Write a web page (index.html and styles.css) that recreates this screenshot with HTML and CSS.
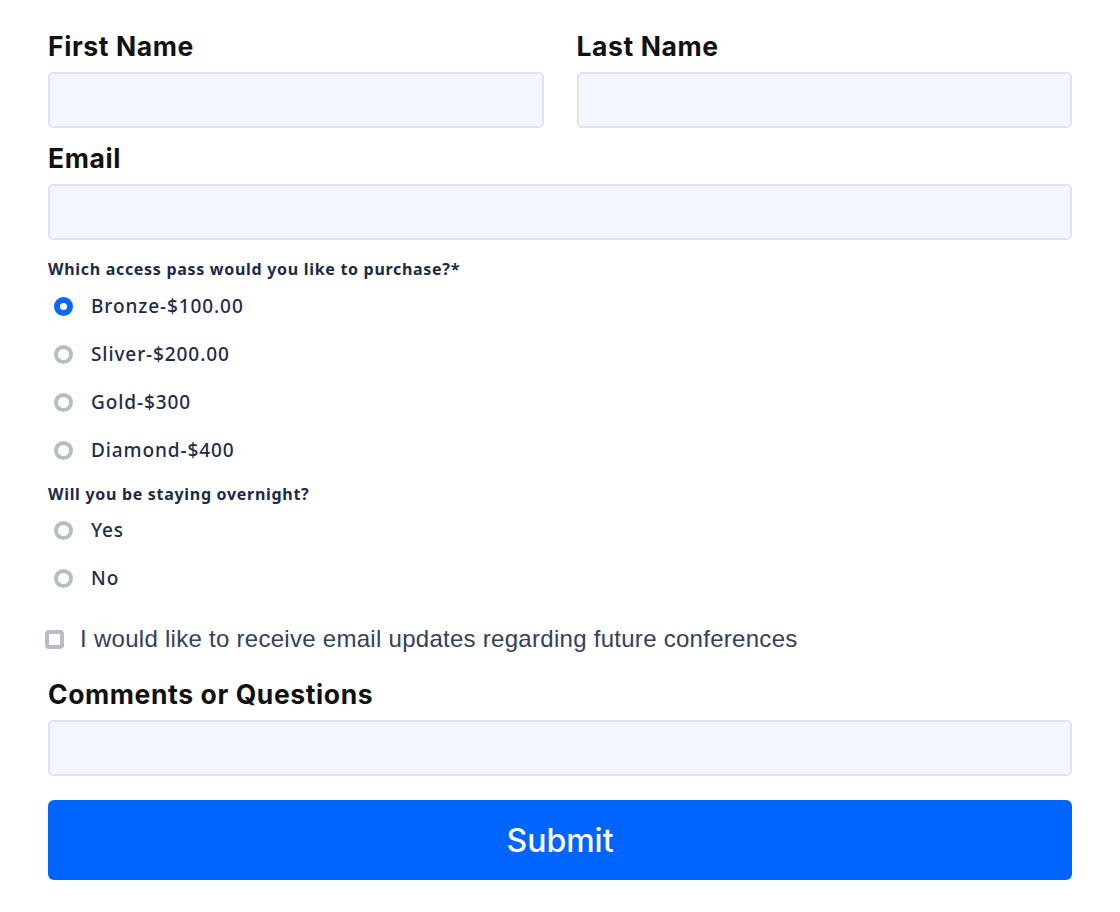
FILE: index.html
```html
<!DOCTYPE html>
<html lang="en">
<head>
<meta charset="utf-8">
<title>Registration Form</title>
<link rel="stylesheet" href="styles.css">
</head>
<body>
<form class="form">
  <div class="row-2">
    <div class="field">
      <label class="label">First Name</label>
      <div class="input"></div>
    </div>
    <div class="field">
      <label class="label">Last Name</label>
      <div class="input"></div>
    </div>
  </div>
  <div class="field email">
    <label class="label">Email</label>
    <div class="input"></div>
  </div>

  <div class="question q1">Which access pass would you like to purchase?*</div>
  <div class="options">
    <div class="option"><span class="radio checked"></span><span class="opt-text">Bronze-$100.00</span></div>
    <div class="option"><span class="radio"></span><span class="opt-text">Sliver-$200.00</span></div>
    <div class="option"><span class="radio"></span><span class="opt-text">Gold-$300</span></div>
    <div class="option"><span class="radio"></span><span class="opt-text">Diamond-$400</span></div>
  </div>

  <div class="question q2">Will you be staying overnight?</div>
  <div class="options">
    <div class="option"><span class="radio"></span><span class="opt-text">Yes</span></div>
    <div class="option"><span class="radio"></span><span class="opt-text">No</span></div>
  </div>

  <div class="check-row">
    <span class="checkbox"></span>
    <span class="check-text">I would like to receive email updates regarding future conferences</span>
  </div>

  <div class="field comments">
    <label class="label">Comments or Questions</label>
    <div class="input"></div>
  </div>

  <button type="button" class="submit">Submit</button>
</form>
</body>
</html>
```

FILE: styles.css
```css
* { box-sizing: border-box; }

body {
  margin: 0;
  background: #ffffff;
  font-family: Inter, "Liberation Sans", Arial, sans-serif;
}

.form {
  padding: 31px 48px 0 48px;
  display: flex;
  flex-direction: column;
}

.row-2 {
  display: grid;
  grid-template-columns: 1fr 1fr;
  column-gap: 33px;
}

.field {
  display: flex;
  flex-direction: column;
}

.label {
  font-family: Inter, "Liberation Sans", sans-serif;
  font-size: 26.5px;
  line-height: 30px;
  font-weight: 700;
  color: #111111;
  letter-spacing: 0.6px;
  margin-bottom: 11px;
}

.input {
  height: 56px;
  background: #f3f6fd;
  border: 2px solid #e0e3e9;
  border-radius: 5px;
}

.email { margin-top: 15px; }

.question {
  font-family: "Noto Sans", "Open Sans", sans-serif;
  font-size: 16px;
  line-height: 20px;
  font-weight: 700;
  color: #1b2a4a;
  letter-spacing: 0.7px;
}

.q1 { margin-top: 19px; margin-bottom: 3px; }
.q2 { margin-top: 10px; margin-bottom: 2px; }

.options {
  display: flex;
  flex-direction: column;
}

.option {
  height: 48px;
  display: flex;
  align-items: center;
  padding-left: 6px;
}

.radio {
  width: 19px;
  height: 19px;
  border-radius: 50%;
  border: 4px solid #b8bcc6;
  background: #ffffff;
  flex: none;
}

.radio.checked {
  border: 6px solid #0a66ff;
  background: #ffffff;
}

.opt-text {
  margin-left: 18px;
  font-family: "Noto Sans", "Open Sans", sans-serif;
  font-size: 19px;
  font-weight: 500;
  letter-spacing: 0.9px;
  color: #1d2b4c;
}

.check-row {
  margin-top: 23px;
  height: 28px;
  display: flex;
  align-items: center;
  margin-left: -3px;
}

.checkbox {
  width: 19px;
  height: 19px;
  border: 4px solid #b8bcc6;
  border-radius: 4px;
  background: #ffffff;
  flex: none;
}

.check-text {
  margin-left: 16px;
  font-family: "Liberation Sans", Arial, sans-serif;
  font-size: 24px;
  letter-spacing: 0.28px;
  color: #334060;
}

.comments { margin-top: 26px; }

.submit {
  margin-top: 24px;
  height: 80px;
  width: 100%;
  background: #0064ff;
  border: none;
  border-radius: 6px;
  color: #ffffff;
  font-family: Inter, "Liberation Sans", sans-serif;
  font-size: 32px;
  font-weight: 500;
}
```
